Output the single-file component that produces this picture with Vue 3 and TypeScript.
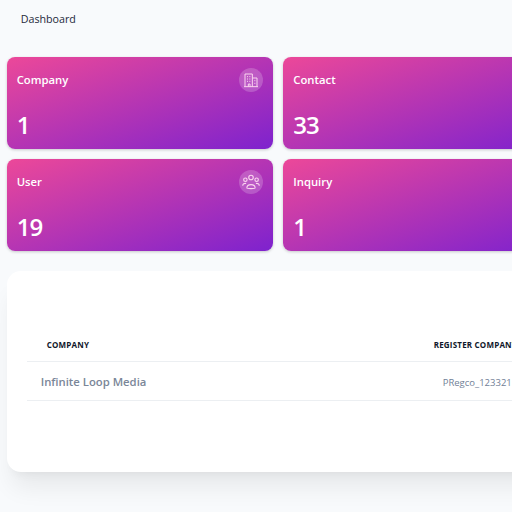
<script setup lang="ts">
interface Stat { label: string; value: number; icon: string }
const stats: Stat[] = [
  { label: 'Company', value: 1, icon: 'building' },
  { label: 'Contact', value: 33, icon: 'contact' },
  { label: 'User', value: 19, icon: 'users' },
  { label: 'Inquiry', value: 1, icon: 'inquiry' },
]
</script>

<template>
  <div class="page">
    <header class="topbar">Dashboard</header>
    <section class="cards">
      <article v-for="s in stats" :key="s.label" class="card">
        <div class="card-top">
          <span class="label">{{ s.label }}</span>
          <span class="badge">
            <svg v-if="s.icon === 'building'" viewBox="0 0 24 24" width="16" height="16" fill="none" stroke="currentColor" stroke-width="1.5">
              <path d="M3 22V3h11v19M14 9h7v13M1.5 22h21M8 22v-4h2.500v4" />
              <path d="M6 7h1.500M9.500 7H11M6 10.500h1.500M9.500 10.500H11M6 14h1.500M9.500 14H11M17 13h1.500M17 17h1.500" />
            </svg>
            <svg v-else-if="s.icon === 'users'" viewBox="0 0 24 24" width="18" height="18" fill="none" stroke="currentColor" stroke-width="1.5">
              <circle cx="12" cy="6" r="3" />
              <circle cx="4.500" cy="9" r="2.300" />
              <circle cx="19.500" cy="9" r="2.300" />
              <path d="M6.500 20c0-6 11-6 11 0 0 1-11 1-11 0zM1 17c0-2.500 2-3.500 4.500-3M23 17c0-2.500-2-3.500-4.500-3" />
            </svg>
            <svg v-else viewBox="0 0 24 24" width="16" height="16" fill="none" stroke="currentColor" stroke-width="1.5">
              <circle cx="12" cy="12" r="8" />
            </svg>
          </span>
        </div>
        <div class="value">{{ s.value }}</div>
      </article>
    </section>
    <section class="panel">
      <div class="row head">
        <div class="col-a">COMPANY</div>
        <div class="col-b">REGISTER COMPANY</div>
      </div>
      <div class="row body-row">
        <div class="col-a name">Infinite Loop Media</div>
        <div class="col-b reg">PRegco_123321</div>
      </div>
    </section>
  </div>
</template>

<style>
html, body { margin: 0; background: #f8fafc; overflow: hidden; }
</style>

<style scoped>
.page {
  width: 512px;
  height: 512px;
  overflow: hidden;
  background: #f8fafc;
  font-family: "Open Sans", "Noto Sans", sans-serif;
  box-sizing: border-box;
  padding: 0 0 0 6.700px;
}
.topbar {
  width: 300px;
  box-sizing: border-box;
  padding: 10px 0 0 14px;
  height: 57.300px;
  font-size: 10.700px;
  line-height: 18px;
  color: #1e293b;
}
.cards {
  display: grid;
  grid-template-columns: repeat(2, 266.600px);
  grid-auto-rows: 92px;
  column-gap: 10px;
  row-gap: 10px;
  width: 544px;
}
.card {
  box-sizing: border-box;
  padding: 10.700px 10px 10px;
  border-radius: 8px;
  color: #fff;
  background: linear-gradient(to bottom right, #ec4899, #7e22ce);
  box-shadow: 0 1px 3px rgba(0, 0, 0, 0.2);
  display: flex;
  flex-direction: column;
  justify-content: space-between;
}
.card-top { display: flex; justify-content: space-between; align-items: flex-start; }
.label { font-size: 11.300px; font-weight: 600; line-height: 24px; }
.badge {
  width: 24px;
  height: 24px;
  border-radius: 50%;
  background: rgba(255, 255, 255, 0.2);
  display: flex;
  align-items: center;
  justify-content: center;
  color: #fbd5ef;
}
.value { font-size: 24px; font-weight: 600; line-height: 32px; margin-bottom: -2px; letter-spacing: -1px; }
.panel {
  margin-top: 20px;
  width: 900px;
  height: 201px;
  box-sizing: border-box;
  padding: 52px 20px 0;
  background: #fff;
  border-radius: 14px;
  box-shadow: 0 20px 25px -5px rgba(0, 0, 0, 0.07), 0 8px 10px -6px rgba(0, 0, 0, 0.05);
}
.row { display: flex; border-bottom: 1px solid #eceff2; }
.head { height: 38px; align-items: center; }
.head > div { padding-top: 4px; }
.body-row { height: 38px; align-items: center; }
.col-a { width: 407px; box-sizing: border-box; }
.head .col-a { padding-left: 20px; }
.head > div { font-size: 8px; font-weight: 700; color: #0f172a; letter-spacing: 0.200px; }
.name { padding-left: 14px; font-size: 11.300px; font-weight: 600; color: #7a8698; }
.reg { padding-left: 9px; padding-top: 3px; font-size: 9.500px; color: #718096; }
</style>
